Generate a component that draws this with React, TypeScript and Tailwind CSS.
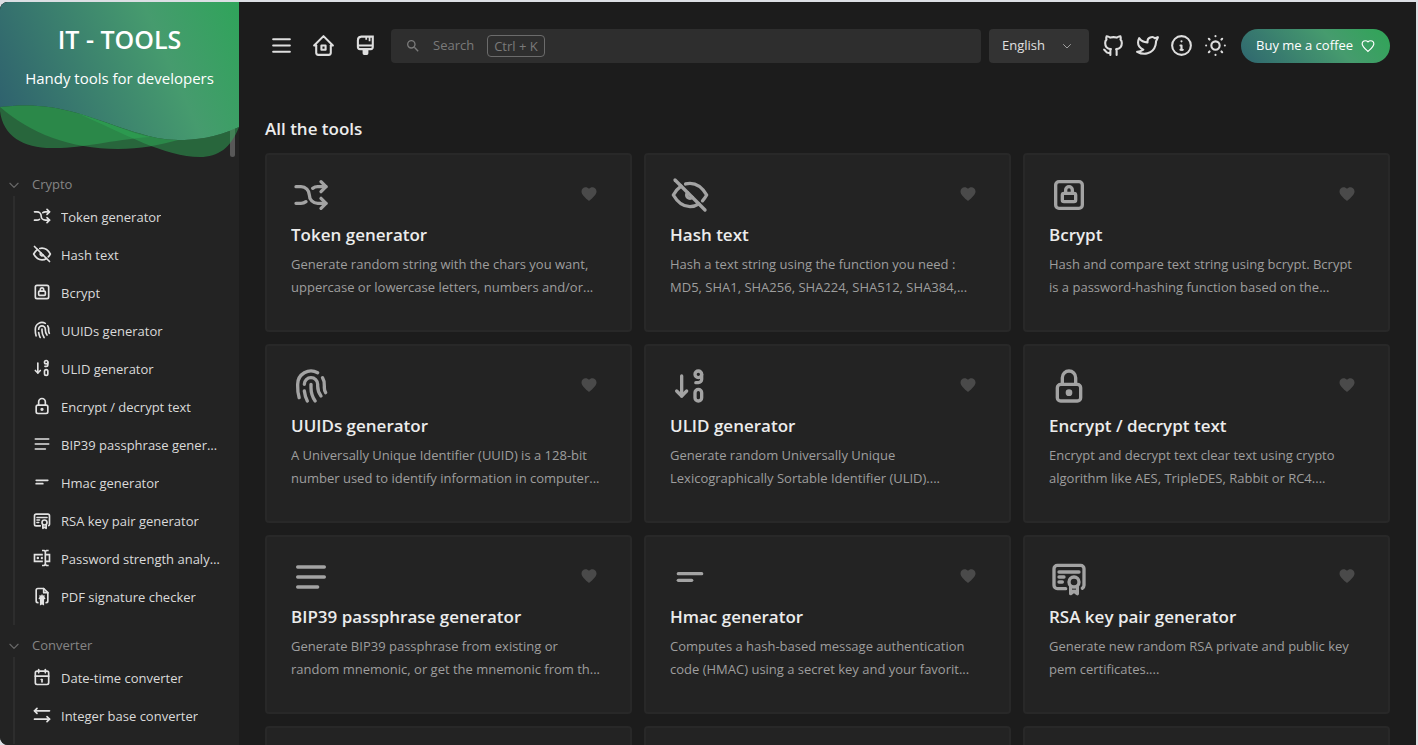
import type { ReactNode } from "react";

type Tool = { name: string; icon: ReactNode; text?: string };

function Stroke({ d, children }: { d?: string[]; children?: ReactNode }) {
  return (
    <svg
      viewBox="0 0 24 24"
      className="h-full w-full"
      fill="none"
      stroke="currentColor"
      strokeWidth="2"
      strokeLinecap="round"
      strokeLinejoin="round"
      aria-hidden="true"
    >
      {d?.map((p) => <path key={p} d={p} />)}
      {children}
    </svg>
  );
}

function Fill({ d }: { d: string }) {
  return (
    <svg viewBox="0 0 24 24" className="h-full w-full" fill="currentColor" aria-hidden="true">
      <path d={d} />
    </svg>
  );
}

const shuffle = (
  <Stroke
    d={[
      "M18 4l3 3l-3 3",
      "M18 20l3-3l-3-3",
      "M3 7h3a5 5 0 0 1 5 5a5 5 0 0 0 5 5h5",
      "M21 7h-5a4.978 4.978 0 0 0-2.998.998",
      "M9 16.001a4.984 4.984 0 0 1-3 .999H3",
    ]}
  />
);
const eyeOff = (
  <Stroke
    d={[
      "M3 3l18 18",
      "M10.584 10.587a2 2 0 0 0 2.828 2.83",
      "M9.363 5.365A9.466 9.466 0 0 1 12 5c4 0 7.333 2.333 10 7c-.778 1.361-1.612 2.524-2.503 3.488m-2.14 1.861C15.726 18.449 13.942 19 12 19c-4 0-7.333-2.333-10-7c1.369-2.395 2.913-4.175 4.632-5.341",
    ]}
  />
);
const lockSquare = (
  <Stroke d={["M10 11V9a2 2 0 1 1 4 0v2"]}>
    <rect x="8" y="11" width="8" height="5" rx="1" />
    <rect x="4" y="4" width="16" height="16" rx="2" />
  </Stroke>
);
const fingerprint = (
  <Stroke
    d={[
      "M18.9 7a8 8 0 0 1 1.1 5v1a6 6 0 0 0 .8 3",
      "M8 11a4 4 0 0 1 8 0v1a10 10 0 0 0 2 6",
      "M12 11v2a14 14 0 0 0 2.5 8",
      "M8 15a18 18 0 0 0 1.8 6",
      "M4.9 19a22 22 0 0 1-.9-7v-1a8 8 0 0 1 12-6.95",
    ]}
  />
);
const sortNumbers = (
  <Stroke
    d={[
      "M4 15l3 3l3-3",
      "M7 6v12",
      "M17 14a2 2 0 0 1 2 2v3a2 2 0 1 1-4 0v-3a2 2 0 0 1 2-2z",
      "M19 5v3a2 2 0 0 1-2 2h-1.5",
    ]}
  >
    <circle cx="17" cy="5" r="2" />
  </Stroke>
);
const lock = (
  <Stroke d={["M8 11V7a4 4 0 0 1 8 0v4"]}>
    <rect x="5" y="11" width="14" height="10" rx="2" />
    <circle cx="12" cy="16" r="1" />
  </Stroke>
);
const alignLeft = <Stroke d={["M4 6h16", "M4 12h16", "M4 18h12"]} />;
const shortText = <Stroke d={["M5 10h14", "M5 14h8"]} />;
const certificate = (
  <Stroke
    d={[
      "M13 17.5V22l2-1.5l2 1.5v-4.5",
      "M10 19H5a2 2 0 0 1-2-2V7c0-1.1.9-2 2-2h14a2 2 0 0 1 2 2v10a2 2 0 0 1-1 1.73",
      "M6 9h12",
      "M6 12h3",
      "M6 15h2",
    ]}
  >
    <circle cx="15" cy="15" r="3" />
  </Stroke>
);
const passwordBox = (
  <Fill d="M17 7h5v10h-5v2a1 1 0 0 0 1 1h2v2h-2.5c-.55 0-1.5-.45-1.5-1c0 .55-.95 1-1.5 1H12v-2h2a1 1 0 0 0 1-1V5a1 1 0 0 0-1-1h-2V2h2.5c.55 0 1.5.45 1.5 1c0-.55.95-1 1.5-1H20v2h-2a1 1 0 0 0-1 1v2M2 7h11v2H4v6h9v2H2V7m18 8V9h-3v6h3M8.5 12A1.5 1.5 0 0 0 7 10.5A1.5 1.5 0 0 0 5.5 12A1.5 1.5 0 0 0 7 13.5A1.5 1.5 0 0 0 8.5 12m4.5-1.11c-.61-.56-1.56-.51-2.12.11c-.56.6-.51 1.55.12 2.11c.55.52 1.43.52 2 0v-2.22z" />
);
const fileCertificate = (
  <Stroke d={["M7 20a2 2 0 0 1-2-2V5a2 2 0 0 1 2-2h7l5 5v10a2 2 0 0 1-2 2", "M14 3v5h5"]}>
    <path
      fill="currentColor"
      stroke="none"
      d="M12 9.500l1 1.900l2.300-.3l-.4 2.200L16.300 15l-1.800 1.200H14.500V23.500L12 22.300L9.500 23.500V16.200L7.700 15l1.400-1.700l-.4-2.200l2.300.3z"
    />
  </Stroke>
);
const calendar = (
  <Stroke d={["M16 3v4", "M8 3v4", "M4 11h16", "M11 15h1", "M12 15v3"]}>
    <rect x="4" y="5" width="16" height="16" rx="2" />
  </Stroke>
);
const leftRight = <Stroke d={["M21 17H3", "M6 10L3 7l3-3", "M3 7h18", "M18 20l3-3l-3-3"]} />;

const menu = <Stroke d={["M4 6h16", "M4 12h16", "M4 18h16"]} />;
const home = <Stroke d={["M5 12H3l9-9l9 9h-2", "M5 12v7a2 2 0 0 0 2 2h10a2 2 0 0 0 2-2v-7", "M10 12h4v4h-4z"]} />;
const brush = (
  <svg viewBox="0 0 24 24" className="h-full w-full" fill="none" stroke="currentColor" strokeWidth="2" aria-hidden="true">
    <path d="M19 3.500H8A3.500 3.500 0 0 0 4.700 7v6.500a2 2 0 0 0 2 2H17a2 2 0 0 0 2-2z" />
    <path d="M4.700 12H19" />
    <path d="M12.700 3.500v3M15.900 3.500v4.500" strokeWidth="1.700" />
    <path d="M9.200 15.500h5.600V19.500a1.500 1.500 0 0 1-1.500 1.500h-2.600a1.500 1.500 0 0 1-1.500-1.500z" fill="currentColor" stroke="none" />
  </svg>
);
const github = (
  <Stroke
    d={[
      "M9 19c-4.300 1.400-4.300-2.500-6-3m12 5v-3.500c0-1 .1-1.400-.5-2c2.800-.3 5.500-1.400 5.500-6a4.600 4.600 0 0 0-1.300-3.200a4.200 4.200 0 0 0-.1-3.200s-1.100-.3-3.500 1.300a12.300 12.300 0 0 0-6.200 0C6.500 2.800 5.400 3.100 5.400 3.100a4.200 4.200 0 0 0-.1 3.200A4.600 4.600 0 0 0 4 9.500c0 4.600 2.700 5.700 5.500 6c-.6.6-.6 1.200-.5 2V21",
    ]}
  />
);
const twitter = (
  <Stroke
    d={[
      "M22 4.010c-1 .49-1.980.689-3 .99c-1.121-1.265-2.783-1.335-4.380-.737S11.977 6.323 12 8v1c-3.245.083-6.135-1.395-8-4c0 0-4.182 7.433 4 11c-1.872 1.247-3.739 2.088-6 2c3.308 1.803 6.913 2.423 10.034 1.517c3.580-1.040 6.522-3.723 7.651-7.742a13.840 13.840 0 0 0 .497-3.753c0-.249 1.510-2.772 1.818-4.013z",
    ]}
  />
);
const info = (
  <Stroke d={["M12 8h.01", "M11 12h1v4h1", "M11 16h2"]}>
    <circle cx="12" cy="12" r="9" />
  </Stroke>
);
const sun = (
  <Stroke d={["M3 12h.01M12 3v.01M21 12h-.01M12 21v-.01M5.600 5.600l.7.7M18.400 5.600l-.7.7M17.700 17.700l.7.7M6.300 17.700l-.7.7"]}>
    <circle cx="12" cy="12" r="4" />
  </Stroke>
);
const chevron = <Stroke d={["M5 9l7 7l7-7"]} />;
const heart =
  "M12 21.350l-1.450-1.320C5.400 15.360 2 12.270 2 8.500C2 5.410 4.420 3 7.500 3c1.740 0 3.410.81 4.500 2.080C13.090 3.810 14.760 3 16.500 3C19.580 3 22 5.410 22 8.500c0 3.770-3.400 6.860-8.550 11.530z";

const crypto: Tool[] = [
  {
    name: "Token generator",
    icon: shuffle,
    text: "Generate random string with the chars you want, uppercase or lowercase letters, numbers and/or...",
  },
  {
    name: "Hash text",
    icon: eyeOff,
    text: "Hash a text string using the function you need : MD5, SHA1, SHA256, SHA224, SHA512, SHA384,...",
  },
  {
    name: "Bcrypt",
    icon: lockSquare,
    text: "Hash and compare text string using bcrypt. Bcrypt is a password-hashing function based on the...",
  },
  {
    name: "UUIDs generator",
    icon: fingerprint,
    text: "A Universally Unique Identifier (UUID) is a 128-bit number used to identify information in computer...",
  },
  {
    name: "ULID generator",
    icon: sortNumbers,
    text: "Generate random Universally Unique Lexicographically Sortable Identifier (ULID)....",
  },
  {
    name: "Encrypt / decrypt text",
    icon: lock,
    text: "Encrypt and decrypt text clear text using crypto algorithm like AES, TripleDES, Rabbit or RC4....",
  },
  {
    name: "BIP39 passphrase generator",
    icon: alignLeft,
    text: "Generate BIP39 passphrase from existing or random mnemonic, or get the mnemonic from th...",
  },
  {
    name: "Hmac generator",
    icon: shortText,
    text: "Computes a hash-based message authentication code (HMAC) using a secret key and your favorit...",
  },
  {
    name: "RSA key pair generator",
    icon: certificate,
    text: "Generate new random RSA private and public key pem certificates....",
  },
  { name: "Password strength analyser", icon: passwordBox },
  { name: "PDF signature checker", icon: fileCertificate },
];

const converter: Tool[] = [
  { name: "Date-time converter", icon: calendar },
  { name: "Integer base converter", icon: leftRight },
];

function Hero() {
  return (
    <header className="relative h-[156px] text-center text-white">
      <svg viewBox="0 0 239 156" preserveAspectRatio="none" className="absolute inset-0 h-full w-full" aria-hidden="true">
        <defs>
          <linearGradient id="hero" gradientUnits="userSpaceOnUse" x1="0" y1="105" x2="240" y2="0">
            <stop offset="0" stopColor="#2f626e" />
            <stop offset="0.66" stopColor="#469b6e" />
            <stop offset="1" stopColor="#2fa45a" />
          </linearGradient>
        </defs>
        <path
          fill="url(#hero)"
          d="M0 0H239V125C215 136 195 138 178 138C150 138 125 126 77 111C50 103 25 102 0 105Z"
        />
        <g fill="#2da956" fillOpacity="0.5">
          <path d="M0 105C25 102 50 103 77 111C110 121 130 131 150 135C110 138 85 146 55 146C25 147 3 135 0 109Z" />
          <path d="M0 105C25 102 50 103 77 111C125 126 150 138 178 138C160 143 140 147 118 147C70 147 30 131 0 105Z" />
          <path d="M77 111C125 126 150 138 178 138C195 138 215 136 239 125C231 146 218 155 200 155C165 155 125 132 77 111Z" />
        </g>
      </svg>
      <div className="relative pt-[21px]">
        <div className="text-[25px] leading-8 font-semibold">IT - TOOLS</div>
        <div className="mt-[11px] text-[15px] leading-6">Handy tools for developers</div>
      </div>
    </header>
  );
}

function Section({ title, tools }: { title: string; tools: Tool[] }) {
  return (
    <section className="mb-[9px]">
      <button className="flex h-[23px] w-full items-center gap-[11px] pl-[7px] text-[13px] text-[#858585]">
        <span className="h-[14px] w-[14px] text-[#686868]">{chevron}</span>
        {title}
      </button>
      <ul className="ml-[13px] border-l-2 border-[#2d2d2d] pt-[3px] pr-4 pb-2 pl-[17px]">
        {tools.map((t) => (
          <li key={t.name}>
            <a href="#" className="flex h-[38px] items-center gap-[9px] text-[13px] text-[#dadada]">
              <span className="mb-[5px] h-5 w-5 shrink-0 text-[#e2e2e2]">{t.icon}</span>
              <span className="truncate">{t.name}</span>
            </a>
          </li>
        ))}
      </ul>
    </section>
  );
}

function IconButton({ label, children }: { label: string; children: ReactNode }) {
  return (
    <button aria-label={label} className="flex h-[34px] w-[34px] shrink-0 items-center justify-center pr-px pb-px text-[#dedede]">
      <span className="h-[25px] w-[25px]">{children}</span>
    </button>
  );
}

function TopBar() {
  return (
    <div className="flex items-center gap-2 text-[13px]">
      <IconButton label="Toggle menu">{menu}</IconButton>
      <IconButton label="Home">{home}</IconButton>
      <IconButton label="UI library">{brush}</IconButton>
      <button className="flex h-[34px] min-w-0 flex-1 items-center rounded bg-[#2e2e2e] px-[14px] text-[#7a7a7a]">
        <span className="h-4 w-4">
          <Fill d="M9.500 3A6.500 6.500 0 0 1 16 9.500c0 1.610-.59 3.090-1.560 4.230l.27.27h.79l5 5l-1.500 1.500l-5-5v-.79l-.27-.27A6.516 6.516 0 0 1 9.500 16A6.500 6.500 0 0 1 3 9.500A6.500 6.500 0 0 1 9.500 3m0 2C7 5 5 7 5 9.500S7 14 9.500 14S14 12 14 9.500S12 5 9.500 5" />
        </span>
        <span className="ml-3">Search</span>
        <kbd className="ml-[13px] rounded border border-[#6b6b6b] px-[6px] font-[inherit] leading-5">Ctrl + K</kbd>
      </button>
      <div className="relative w-[100px] shrink-0">
        <select
          aria-label="Language"
          className="h-[34px] w-full appearance-none rounded bg-[#333333] pl-[13px] text-[#e0e0e0]"
        >
          <option>English</option>
        </select>
        <span className="pointer-events-none absolute top-[11px] right-4 h-3 w-3 text-[#a0a0a0]">{chevron}</span>
      </div>
      <div className="flex">
        <IconButton label="GitHub">{github}</IconButton>
        <IconButton label="Twitter">{twitter}</IconButton>
        <IconButton label="About">{info}</IconButton>
        <IconButton label="Light mode">{sun}</IconButton>
      </div>
      <a
        href="#"
        className="flex h-[34px] shrink-0 items-center gap-2 rounded-full bg-[linear-gradient(48deg,#2f666f_0%,#469b6e_62%,#2fa556_100%)] px-[15px] text-white"
      >
        Buy me a coffee
        <span className="h-[14px] w-[14px]">
          <svg viewBox="0 0 24 24" fill="none" stroke="currentColor" strokeWidth="2" aria-hidden="true">
            <path d={heart} />
          </svg>
        </span>
      </a>
    </div>
  );
}

function Card({ tool }: { tool: Tool }) {
  return (
    <article className="rounded border-2 border-[#282828] bg-[#232323] px-6 pt-5 pb-[31px]">
      <div className="flex items-center justify-between">
        <span className="h-10 w-10 text-[#a3a3a3]">{tool.icon}</span>
        <button
          aria-label={`Favorite ${tool.name}`}
          className="flex h-[34px] w-[34px] items-center justify-center pb-[2px] text-[#4a4a4a]"
        >
          <span className="h-[18px] w-[18px]">
            <Fill d={heart} />
          </span>
        </button>
      </div>
      <h3 className="mt-[6px] truncate text-[17px] leading-7 font-semibold text-[#ececec]">{tool.name}</h3>
      <p className="mt-1 line-clamp-2 h-[46px] text-[13px] leading-[23px] text-[#9e9e9e]">{tool.text}</p>
    </article>
  );
}

const nextRow: Tool[] = [
  { name: "Password strength analyser", icon: passwordBox, text: "Discover the strength of your password." },
  { name: "PDF signature checker", icon: fileCertificate, text: "Verify the signatures of a PDF file." },
  { name: "Date-time converter", icon: calendar, text: "Convert date and time into various formats." },
];

export default function App() {
  return (
    <div className="h-screen bg-[#dcdfe4] pt-[2px] pr-[2px] font-['Open_Sans','Noto_Sans',sans-serif]">
      <div className="flex h-full overflow-hidden rounded-l-lg bg-[#1c1c1c]">
        <aside className="relative w-[239px] shrink-0 overflow-hidden bg-[#232323]">
          <div className="absolute top-24 right-1 h-[59px] w-[5px] rounded-full bg-[#585858]" />
          <Hero />
          <nav className="pt-[15px]">
            <Section title="Crypto" tools={crypto} />
            <Section title="Converter" tools={converter} />
          </nav>
        </aside>
        <main className="min-w-0 flex-1 overflow-hidden px-[26px] pt-[27px]">
          <TopBar />
          <h2 className="mt-[52px] mb-[10px] text-[17px] leading-7 font-semibold text-[#ececec]">All the tools</h2>
          <div className="grid grid-cols-3 gap-3">
            {crypto.slice(0, 9).concat(nextRow).map((t) => (
              <Card key={t.name} tool={t} />
            ))}
          </div>
        </main>
      </div>
    </div>
  );
}
